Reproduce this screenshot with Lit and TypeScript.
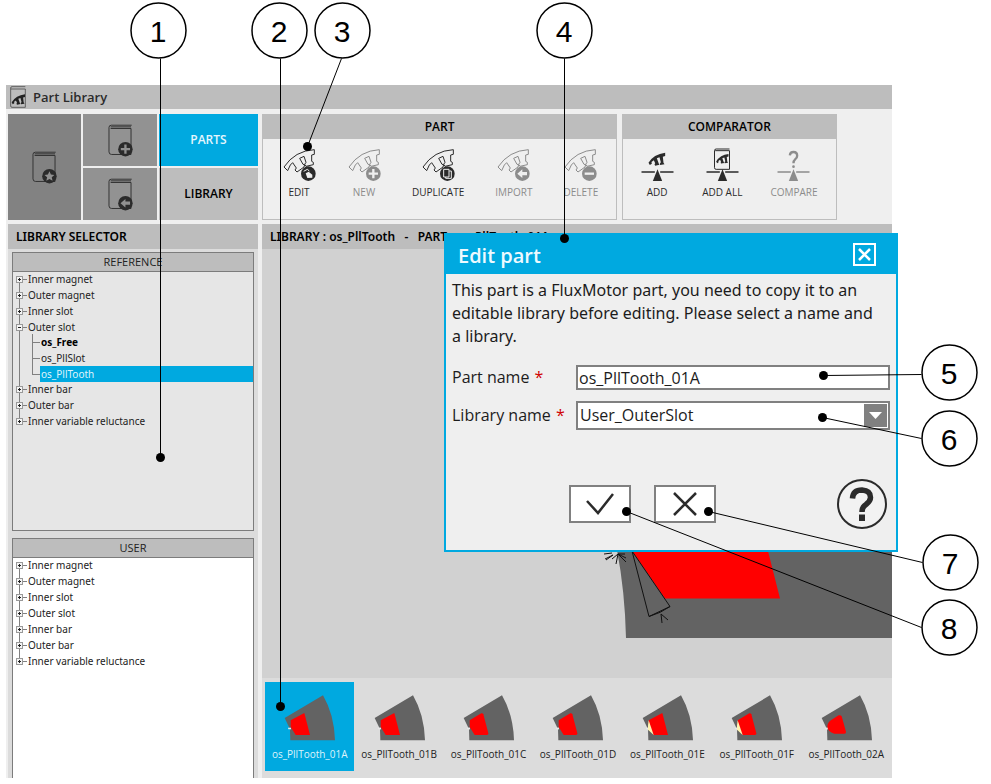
import { LitElement, html, svg, css, nothing } from "lit";
import { customElement, property } from "lit/decorators.js";
import { classMap } from "lit/directives/class-map.js";

/* Round badge glyphs, centred on 0,0 with a radius of 22 units */
const badgeGlyphs: Record<string, unknown> = {
  star: svg`<path d="M0 -15 L4.500 -5 L15 -4 L7 3 L9.500 14 L0 8.500 L-9.500 14 L-7 3 L-15 -4 L-4.500 -5Z" fill="var(--badge-ink)"/>`,
  plus: svg`<path d="M-14 0H14M0 -14V14" stroke="var(--badge-ink)" stroke-width="7"/>`,
  minus: svg`<path d="M-14 0H14" stroke="var(--badge-ink)" stroke-width="7"/>`,
  arrow: svg`<path d="M-15 0L0 -13V-5H14V5H0V13Z" fill="var(--badge-ink)"/>`,
  copy: svg`<path d="M-11 -13H5V10H-11ZM6 -8H12V14H-5V10" fill="none" stroke="var(--badge-ink)" stroke-width="3"/>`,
  edit: svg`<path d="M-14 -7L-3 -13L3 -8" fill="none" stroke="var(--badge-ink)" stroke-width="3"/><path d="M-8 -1L1 -6L12 3V12L-3 13Z" fill="var(--badge-ink)"/>`,
};

const book = (badge: string) => svg`
  <svg class="book" viewBox="0 0 76 99" aria-hidden="true">
    <path d="M72 3H10Q3 3 3 10V84Q3 92 11 92H70V13H8M8 8H70" fill="none" stroke="#333" stroke-width="3"/>
    <g transform="translate(53 76)"><circle r="22" fill="#2b2b2b"/>${badgeGlyphs[badge]}</g>
  </svg>`;

const sectorOutline =
  "M3 57Q36 8 94 5V19L86 21V40L91 43V50L69 55L65 49L69 43L63 25L50 31L60 49L65 50L63 57L42 72L36 66L40 60L29 44L22 51L14 68Z";

const partIcon = (badge: string) => svg`
  <svg class="tool-icon" viewBox="0 0 99 99" aria-hidden="true">
    <path d=${sectorOutline} fill="none" stroke="currentColor" stroke-width="3"/>
    <g transform="translate(76 77)"><circle r="22" fill="currentColor"/>${badgeGlyphs[badge]}</g>
  </svg>`;

const filledSector =
  "M0 30Q16 4 50 0V10L43 12L45 30L48 35L35 37L34 33L37 29L33 14L25 17L31 33L33 36L20 39L18 35L20 32L16 23L9 28L10 33L4 37Z";

const balance = svg`<path d="M0 72H40M56 72H96" stroke="currentColor" stroke-width="4"/><path d="M48 64L62 99H34Z" fill="currentColor"/>`;

const compareIcon = (kind: string) => svg`
  <svg class="tool-icon" viewBox="0 0 96 99" aria-hidden="true">
    ${kind === "add" ? svg`<path transform="translate(21 14)" d=${filledSector} fill="currentColor"/>` : nothing}
    ${kind === "all"
      ? svg`<path d="M69 3H29Q24 3 24 8V59Q24 64 29 64H69V8H26" fill="none" stroke="currentColor" stroke-width="3"/>
            <path transform="translate(29 18) scale(.74)" d=${filledSector} fill="currentColor"/>`
      : nothing}
    ${kind === "ask"
      ? svg`<path d="M37 22Q38 12 48 12Q59 12 59 23Q59 30 53 34Q48 38 48 46" fill="none" stroke="currentColor" stroke-width="7"/><circle cx="48" cy="56" r="4" fill="currentColor"/>`
      : nothing}
    ${balance}
  </svg>`;

interface Tool {
  label: string;
  icon: unknown;
  off?: boolean;
}

@customElement("tool-group")
export class ToolGroup extends LitElement {
  @property() heading = "";
  @property({ attribute: false }) tools: Tool[] = [];

  static styles = css`
    :host {
      display: flex;
      flex-direction: column;
      border: 1px solid #bdbdbd;
      --badge-ink: #efefef;
    }
    h2 {
      margin: 0;
      background: #bdbdbd;
      font-size: 12px;
      line-height: 24px;
      font-weight: 600;
      text-align: center;
    }
    .row {
      display: flex;
      gap: var(--tool-gap, 31px);
      padding: 9px 18px 0 var(--tool-inset, 19px);
    }
    button {
      display: flex;
      flex-direction: column;
      align-items: center;
      gap: 4px;
      min-width: 34px;
      padding: 0;
      border: 0;
      background: none;
      color: #2b2b2b;
      font: 10px/14px "Open Sans", "Noto Sans", sans-serif;
    }
    button:disabled {
      color: #8c8c8c;
    }
    .tool-icon {
      display: block;
      width: 33px;
      height: 33px;
    }
  `;

  render() {
    return html`
      <h2>${this.heading}</h2>
      <div class="row">
        ${this.tools.map(
          (t) => html`<button type="button" ?disabled=${t.off}>${t.icon}<span>${t.label}</span></button>`,
        )}
      </div>
    `;
  }
}

interface Node {
  label: string;
  children?: { label: string; bold?: boolean; selected?: boolean }[];
}

@customElement("library-tree")
export class LibraryTree extends LitElement {
  @property() heading = "";
  @property({ attribute: false }) nodes: Node[] = [];

  static styles = css`
    :host {
      display: flex;
      flex-direction: column;
      border: 1px solid #7c7c7c;
      box-sizing: border-box;
    }
    h3 {
      margin: 0 0 -1px;
      border-bottom: 1px solid #7c7c7c;
      background: #bdbdbd;
      color: #222;
      font-size: 11px;
      line-height: 18px;
      font-weight: 400;
      text-align: center;
    }
    ul {
      list-style: none;
      margin: 0;
      padding: 0;
    }
    ul ul {
      margin: -1px 0;
    }
    button {
      display: flex;
      width: 100%;
      padding: 0 0 0 3px;
      border: 0;
      background: none;
      color: #222;
      text-align: left;
      font: 10px/16px "Noto Sans", "Open Sans", sans-serif;
    }
    .bold {
      font-weight: 700;
      color: #000;
    }
    svg {
      flex: none;
      display: block;
    }
    span {
      flex: 1;
      padding-left: 1px;
    }
    .selected span {
      background: #00a9e0;
      color: #dff3fb;
    }
  `;

  private expander(first: boolean, last: boolean, open: boolean) {
    return svg`<svg width="11" height="16" aria-hidden="true" fill="none" stroke="#808080">
      <path d=${`M3.500 ${first ? 8 : 0}V${last ? 8 : 16}M7 8.500H11`}/>
      <rect x="0.500" y="5.500" width="6" height="6" fill="#f4f4f4" stroke="#999"/>
      <path d=${open ? "M2 8.500H5" : "M2 8.500H5M3.500 7V10"} stroke="#222"/>
    </svg>`;
  }

  private branch(last: boolean) {
    return svg`<svg width="24" height="16" aria-hidden="true" fill="none" stroke="#808080">
      <path d=${`M3.500 0V16M16.500 0V${last ? 9 : 16}M16 8.500H24`}/>
    </svg>`;
  }

  render() {
    const n = this.nodes.length;
    return html`
      <h3>${this.heading}</h3>
      <ul>
        ${this.nodes.map(
          (node, i) => html`<li>
            <button type="button">${this.expander(i === 0, i === n - 1, !!node.children)}<span>${node.label}</span></button>
            ${node.children
              ? html`<ul>
                  ${node.children.map(
                    (c, k) => html`<li>
                      <button type="button" class=${classMap({ bold: !!c.bold, selected: !!c.selected })}>
                        ${this.branch(k === node.children!.length - 1)}<span>${c.label}</span>
                      </button>
                    </li>`,
                  )}
                </ul>`
              : nothing}
          </li>`,
        )}
      </ul>
    `;
  }
}

const slotShapes: Record<string, { d: string; wedge?: boolean }> = {
  sharp: { d: "M20 76L61 54L78 120H35L20 96Z" },
  rounded: { d: "M20 76L55 55Q59 54 61 58L76 115Q76 120 72 120H35L20 96Z" },
  wedge: { d: "M20 76L61 54L78 120H35L20 90Z", wedge: true },
  wedgeRounded: { d: "M20 76L55 55Q59 54 61 58L76 115Q76 120 72 120H35L20 90Z", wedge: true },
  bullet: { d: "M32 74L53 61Q59 59 62 64L75 110Q76 116 70 116H40Q20 112 19 94Q20 80 32 74Z" },
};

const thumb = (kind: string) => svg`
  <svg class="thumb" viewBox="0 0 153 138" aria-hidden="true">
    <path d="M2 69L117 1Q151 60 153 136H19L18 103H21V98H16Z" fill="#636363"/>
    <path d="M12 98H21V103H13Z" fill="#e8e8e8"/>
    <path d=${slotShapes[kind].d} fill="#f00"/>
    ${slotShapes[kind].wedge ? svg`<path d="M20 76L35 120L18 104V92Z" fill="#fff3b0"/>` : nothing}
  </svg>`;

const parts = [
  ["os_PllTooth_01A", "sharp"],
  ["os_PllTooth_01B", "sharp"],
  ["os_PllTooth_01C", "rounded"],
  ["os_PllTooth_01D", "rounded"],
  ["os_PllTooth_01E", "wedge"],
  ["os_PllTooth_01F", "wedgeRounded"],
  ["os_PllTooth_02A", "bullet"],
];

/* Numbered callouts: circle centre, then the two ends of its leader line */
const callouts = [
  [1, 158, 30, 160, 58, 160, 457],
  [2, 279, 30, 280, 58, 280, 706],
  [3, 342, 30, 341, 58, 307, 146],
  [4, 564, 30, 564, 58, 564, 238],
  [5, 949, 372, 921, 374, 823, 375],
  [6, 949, 438, 921, 438, 822, 417],
  [7, 950, 562, 922, 562, 708, 511],
  [8, 949, 627, 921, 627, 626, 511],
];

const roots = ["Inner magnet", "Outer magnet", "Inner slot", "Outer slot", "Inner bar", "Outer bar", "Inner variable reluctance"];
const userNodes: Node[] = roots.map((label) => ({ label }));
const referenceNodes: Node[] = roots.map((label) =>
  label === "Outer slot"
    ? {
        label,
        children: [{ label: "os_Free", bold: true }, { label: "os_PllSlot" }, { label: "os_PllTooth", selected: true }],
      }
    : { label },
);

@customElement("app-root")
export class AppRoot extends LitElement {
  static styles = css`
    :host {
      display: block;
      position: relative;
      box-sizing: border-box;
      min-height: 100vh;
      padding: 85px 99px 6px 6px;
      background: #fff;
      color: #000;
      font-family: "Open Sans", "Noto Sans", sans-serif;
      --badge-ink: #909090;
      overflow: hidden;
    }
    .window {
      position: relative;
      display: flex;
      flex-direction: column;
      min-height: calc(100vh - 91px);
      background: #efefef;
    }
    .title {
      display: flex;
      align-items: center;
      gap: 7px;
      height: 24px;
      padding-left: 4px;
      background: #bdbdbd;
    }
    .title h1 {
      margin: 0;
      font-size: 13px;
      font-weight: 600;
      color: #2b2b2b;
    }
    .title svg {
      width: 16px;
      height: 22px;
    }
    .top,
    .main {
      display: grid;
      grid-template-columns: 250px 1fr;
      gap: 4px;
      padding-left: 2px;
    }
    .top {
      margin: 5px 0 4px;
      height: 106px;
    }
    .nav {
      display: grid;
      grid-template: 1fr 1fr / 73px 74px 1fr;
      gap: 2px;
    }
    .nav button {
      display: grid;
      place-items: center;
      border: 0;
      padding: 0;
      background: #929292;
      font: 600 12px/16px "Open Sans", "Noto Sans", sans-serif;
    }
    .nav .home {
      grid-row: span 2;
      background: #828282;
    }
    .nav .parts {
      background: #00a9e0;
      color: #e4f6fd;
    }
    .nav .library {
      background: #bdbdbd;
      color: #000;
    }
    .book {
      width: 25px;
      height: 33px;
    }
    .groups {
      display: flex;
      gap: 5px;
    }
    .comparator {
      --tool-gap: 28px;
      --tool-inset: 17px;
    }
    .main {
      flex: 1;
    }
    .bar {
      margin: 0;
      padding-left: 8px;
      background: #bdbdbd;
      font: 600 12px/25px "Noto Sans", "Open Sans", sans-serif;
      white-space: pre;
    }
    .side {
      display: flex;
      flex-direction: column;
      background: #dcdcdc;
    }
    .trees {
      flex: 1;
      display: grid;
      grid-template-rows: 279px 1fr;
      gap: 7px;
      padding: 3px 4px 0;
    }
    .reference {
      background: #e6e6e6;
    }
    .user {
      background: #fff;
      border-bottom: 0;
    }
    .view {
      display: flex;
      flex-direction: column;
      min-width: 0;
      background: #d1d1d1;
    }
    .stage {
      flex: 1;
      display: flex;
      justify-content: flex-end;
      align-items: flex-end;
      padding-bottom: 40px;
    }
    .stage svg {
      display: block;
    }
    .strip {
      display: flex;
      padding: 4px 1px 7px 3px;
      background: #dcdcdc;
    }
    .strip button {
      flex: 1;
      min-width: 0;
      display: flex;
      flex-direction: column;
      align-items: center;
      gap: 6px;
      padding: 13px 0 10px;
      border: 0;
      background: none;
      color: #222;
      font: 10px/14px "Open Sans", "Noto Sans", sans-serif;
    }
    .strip .current {
      background: #00a9e0;
      color: #dff3fb;
    }
    .thumb {
      width: 51px;
      height: 46px;
    }
    .dialog {
      position: absolute;
      top: 148px;
      right: -6px;
      width: 454px;
      box-sizing: border-box;
      border: 2px solid #00a9e0;
      background: #efefef;
      color: #1c1c1c;
      font-size: 16px;
      line-height: 23px;
    }
    .dialog header {
      display: flex;
      align-items: center;
      justify-content: space-between;
      height: 39px;
      padding: 0 20px 0 12px;
      background: #00a9e0;
      color: #eefaff;
    }
    .dialog h2 {
      margin: 0;
      padding-top: 2px;
      font-size: 20px;
      font-weight: 600;
    }
    .close {
      display: grid;
      place-items: center;
      width: 23px;
      height: 23px;
      padding: 0;
      border: 2px solid #fff;
      background: none;
    }
    .body {
      padding: 5px 6px 21px;
    }
    .body p {
      margin: 0;
      padding-right: 8px;
      font-family: "Noto Sans", "Open Sans", sans-serif;
    }
    .form {
      display: grid;
      grid-template-columns: 124px 1fr;
      align-items: center;
      row-gap: 11px;
      margin-top: 17px;
    }
    .star {
      padding-left: 1px;
      color: #d00000;
    }
    .field {
      width: 100%;
      height: 25px;
      box-sizing: border-box;
      border: 2px solid #808080;
      border-radius: 0;
      padding: 0 1px;
      background: #fff;
      color: #1c1c1c;
      font: 16px/21px "Open Sans", "Noto Sans", sans-serif;
      appearance: none;
    }
    .pick {
      display: grid;
      grid-template: 1fr / 1fr;
    }
    .pick .field {
      grid-area: 1 / 1;
      height: 29px;
      padding-left: 2px;
    }
    .pick svg {
      grid-area: 1 / 1;
      place-self: center end;
      margin-right: 3px;
      pointer-events: none;
    }
    .actions {
      display: flex;
      gap: 23px;
      align-items: center;
      margin-top: 49px;
      padding: 0 3px 0 117px;
    }
    .actions .act {
      display: grid;
      place-items: center;
      width: 62px;
      height: 38px;
      padding: 0;
      border: 2px solid #808080;
      background: #fff;
    }
    .help {
      margin-left: auto;
      padding: 0;
      width: 50px;
      height: 50px;
      border: 0;
      background: none;
    }
    .notes {
      position: absolute;
      top: 0;
      left: 0;
      width: 991px;
      height: 784px;
      pointer-events: none;
    }
    .notes text {
      font: 30px "Liberation Sans", Arial, sans-serif;
      text-anchor: middle;
    }
  `;

  private readonly partTools: Tool[] = [
    { label: "EDIT", icon: partIcon("edit") },
    { label: "NEW", icon: partIcon("plus"), off: true },
    { label: "DUPLICATE", icon: partIcon("copy") },
    { label: "IMPORT", icon: partIcon("arrow"), off: true },
    { label: "DELETE", icon: partIcon("minus"), off: true },
  ];

  private readonly compareTools: Tool[] = [
    { label: "ADD", icon: compareIcon("add") },
    { label: "ADD ALL", icon: compareIcon("all") },
    { label: "COMPARE", icon: compareIcon("ask"), off: true },
  ];

  private drawing() {
    return svg`<svg width="292" height="240" viewBox="600 398 292 240" role="img" aria-label="Slot drawing">
      <path d="M560 398H892V638H626Q625 592 617 550Z" fill="#636363"/>
      <path d="M632 551L650 480L750 480L780 598.500H665Z" fill="#f00"/>
      <path d="M620 551H632L670 606.500L649 616.500L632 551M670 606.500Q661 613 649 616.500" fill="none" stroke="#111"/>
      <path d="M604 554L612 553M605 559L613 555L606 560M616 564L618 554L612 559M626 562L618 554L625 554M618 554L626 558M662 623L661 614L668 620" fill="none" stroke="#111"/>
    </svg>`;
  }

  private dialog() {
    return html`<section class="dialog" role="dialog" aria-labelledby="dialog-title">
      <header>
        <h2 id="dialog-title">Edit part</h2>
        <button class="close" type="button" aria-label="Close">
          <svg width="13" height="13" viewBox="0 0 13 13"><path d="M1 1L12 12M12 1L1 12" stroke="#fff" stroke-width="2.500"/></svg>
        </button>
      </header>
      <div class="body">
        <p>This part is a FluxMotor part, you need to copy it to an editable library before editing. Please select a name and a library.</p>
        <div class="form">
          <label for="part-name">Part name <span class="star">*</span></label>
          <input id="part-name" class="field" .value=${"os_PllTooth_01A"} />
          <label for="library-name">Library name <span class="star">*</span></label>
          <div class="pick">
            <select id="library-name" class="field">
              <option>User_OuterSlot</option>
            </select>
            <svg width="23" height="23" viewBox="0 0 23 23" aria-hidden="true"><path d="M0 0H23V23H0Z" fill="#808080"/><path d="M5 8H18L11.500 15Z" fill="#fff"/></svg>
          </div>
        </div>
        <div class="actions">
          <button class="act" type="button" aria-label="Confirm">
            <svg width="28" height="22" viewBox="0 0 28 22" fill="none" stroke="#2b2b2b" stroke-width="2.500"><path d="M1 8L12 20L27 1"/></svg>
          </button>
          <button class="act" type="button" aria-label="Cancel">
            <svg width="24" height="24" viewBox="0 0 24 24" stroke="#2b2b2b" stroke-width="2.500"><path d="M1 1L23 23M23 1L1 23"/></svg>
          </button>
          <button class="help" type="button" aria-label="Help">
            <svg width="50" height="50" viewBox="0 0 50 50">
              <circle cx="25" cy="25" r="24" fill="#f2f2f2" stroke="#2b2b2b" stroke-width="2"/>
              <path d="M15.500 19.500Q16 11 25 11Q33.500 11.500 33.500 18.500Q33.500 22 29 25.500Q25 28 25 33" fill="none" stroke="#2b2b2b" stroke-width="5.500"/>
              <path d="M22 35.500H28V42H22Z" fill="#2b2b2b"/>
            </svg>
          </button>
        </div>
      </div>
    </section>`;
  }

  render() {
    return html`
      <div class="window">
        <div class="title">
          <svg viewBox="0 0 48 66" aria-hidden="true">
            <path d="M46 2H6Q2 2 2 6V60Q2 64 6 64H46V9H3" fill="none" stroke="#333" stroke-width="2"/>
            <path transform="translate(5 25) scale(.8)" d=${filledSector} fill="#222"/>
          </svg>
          <h1>Part Library</h1>
        </div>
        <div class="top">
          <nav class="nav">
            <button class="home" type="button" aria-label="Favourite library">${book("star")}</button>
            <button type="button" aria-label="New library">${book("plus")}</button>
            <button class="parts" type="button">PARTS</button>
            <button type="button" aria-label="Import library">${book("arrow")}</button>
            <button class="library" type="button">LIBRARY</button>
          </nav>
          <div class="groups">
            <tool-group heading="PART" .tools=${this.partTools}></tool-group>
            <tool-group class="comparator" heading="COMPARATOR" .tools=${this.compareTools}></tool-group>
          </div>
        </div>
        <div class="main">
          <aside class="side">
            <h2 class="bar">LIBRARY SELECTOR</h2>
            <div class="trees">
              <library-tree class="reference" heading="REFERENCE" .nodes=${referenceNodes}></library-tree>
              <library-tree class="user" heading="USER" .nodes=${userNodes}></library-tree>
            </div>
          </aside>
          <section class="view">
            <h2 class="bar">LIBRARY : os_PllTooth   -   PART : os_PllTooth_01A</h2>
            <div class="stage">${this.drawing()}</div>
            <div class="strip">
              ${parts.map(
                ([label, kind], i) => html`<button type="button" class=${classMap({ current: i === 0 })}>
                  ${thumb(kind)}<span>${label}</span>
                </button>`,
              )}
            </div>
          </section>
        </div>
        ${this.dialog()}
      </div>
      <svg class="notes" viewBox="0 0 991 784">
        ${callouts.map(
          ([n, cx, cy, x1, y1, x2, y2]) => svg`
            <line x1=${x1} y1=${y1} x2=${x2} y2=${y2} stroke="#000" transform="translate(.5 .5)"/>
            <circle cx=${x2} cy=${y2} r="4.500" transform="translate(.5 .5)"/>
            <circle cx=${cx} cy=${cy} r="27.500" fill="#fff" stroke="#000" stroke-width="1.500" transform="translate(.5 .5)"/>
            <text x=${cx} y=${cy + 12}>${n}</text>`,
        )}
      </svg>
    `;
  }
}
